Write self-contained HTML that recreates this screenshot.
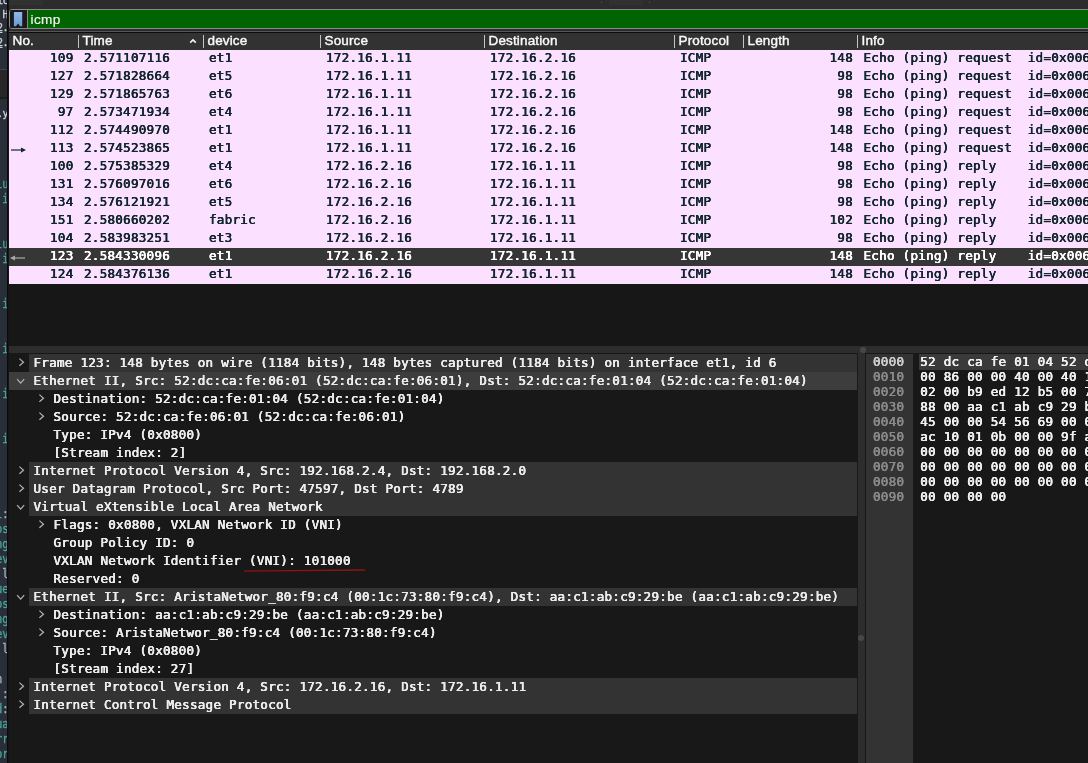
<!DOCTYPE html><html><head><meta charset="utf-8"><title>Wireshark</title><style>
*{margin:0;padding:0;box-sizing:border-box}
html,body{width:1088px;height:763px;overflow:hidden;background:#171717}
body{position:relative;font-family:"Liberation Sans",sans-serif;}
.abs{position:absolute}
.mono{font-family:"DejaVu Sans Mono","Liberation Mono",monospace;font-size:12.6px;letter-spacing:0.24px;white-space:pre;-webkit-text-stroke:0.15px;text-shadow:0.22px 0 0 currentColor,-0.22px 0 0 currentColor;will-change:transform}
#strip{will-change:transform;left:0;top:0;width:8px;height:763px;background:#292f38;overflow:hidden}
#strip span{position:absolute;right:0px;letter-spacing:-0.5px;-webkit-text-stroke:0.3px;font-family:"DejaVu Sans Mono","Liberation Mono",monospace;font-size:10px;line-height:14px;height:14px;white-space:pre}#strip b{font-weight:normal}
#strip .blk{position:absolute;left:0;top:69px;width:8px;height:30px;background:#272727;border-top:1px solid #454545;border-bottom:2px solid #1c1c1c}
#edge{left:7px;top:0;width:2px;height:763px;background:linear-gradient(to right,#0b0b0c 0,#0b0b0c 1px,#161416 1px,#161416 2px)}
#toolbar{left:9px;top:0;width:1079px;height:31px;background:#2c2c2c}
#tline{z-index:5;left:9px;top:31px;width:1079px;height:2px;background:#0c0c0c;border-top:1px solid #555}
#filter{will-change:transform;left:9px;top:9px;width:1090px;height:20px;border:1px solid #8a8a8a;border-radius:3px;background:#1b1b1b;overflow:hidden}#filter .gr{position:absolute;left:18px;top:0;width:1080px;height:18px;background:#006400}
#filter .bm{position:absolute;left:0;top:0;width:18px;height:18px;background:#1b1b1b;border-right:1px solid #8a8a8a;padding-left:1px}#filter .bm svg{display:block}
#filter .txt{position:absolute;left:20.6px;top:1px;height:18px;line-height:18px;font-size:13.6px;letter-spacing:0.3px;color:#f4f4f4;-webkit-text-stroke:0.2px}
#header{will-change:transform;-webkit-text-stroke:0.4px;letter-spacing:0.15px;left:9px;top:32px;border-top:0;width:1079px;height:18px;background:#323232;color:#fafafa;font-size:13.5px;line-height:18px}
#header span{position:absolute;top:0;white-space:pre}
#header i{position:absolute;top:3px;width:1px;height:13px;background:#c4c4c4}
#plist{left:9px;top:50px;width:1079px;height:234px;background:#fce0ff}
.row{position:absolute;left:0;width:1079px;height:18px;line-height:18px;color:#12272e}
.row.sel{background:#363636;color:#fff}
.row span{position:absolute;top:-1px;-webkit-text-stroke:0.2px;text-shadow:0.2px 0 0 currentColor,-0.2px 0 0 currentColor}
.row .r{text-align:right}
#pbelow{left:9px;top:284px;width:1079px;height:62px;background:#171717}
#hsplit{left:9px;top:346px;width:1079px;height:7px;background:#2d2d2d}
#tree{left:9px;top:354px;width:848px;height:409px;background:#181818;overflow:hidden}
.trow{position:absolute;left:0;width:848px;height:18px;line-height:18px;color:#ececec}
.trow .bg{position:absolute;top:0;height:18px;right:0;background:#333}
.trow .t{position:absolute;top:0}
.trow svg{position:absolute;top:0}
#vsplit{left:857px;top:353px;width:9px;height:410px;background:#2d2d2d;border-left:1px solid #191919;border-right:1px solid #191919}
#hex{left:866px;top:354px;width:222px;height:409px;background:#181818;overflow:hidden}
#hex .off{position:absolute;left:0;top:0;width:47px;height:409px;background:#333}
.hrow{position:absolute;left:0;height:15px;line-height:15px;width:400px}
.hrow .o{position:absolute;left:7px;top:0;color:#8a8a8a}
  .hrow .b{position:absolute;left:53.3px;top:0;color:#f0f0f0;padding-left:1px}
.hrow.hl .o{color:#cdcdcd}
.hrow.hl .b{background:#3a3a3a;height:16px}
.dot{width:6px;height:6px;border-radius:3px;background:#484848}
</style></head><body>
<div id="strip" class="abs"><div class="blk"></div>
<span style="top:-6.5px;color:#cfd3d9">ic</span>
<span style="top:7.5px;color:#cfd3d9"> H</span>
<span style="top:21.0px;color:#cfd3d9"><u>2</u>.</span>
<span style="top:35.5px;color:#cfd3d9"><u>2</u>.</span>
<span style="top:106.5px;color:#cfd3d9">.y</span>
<span style="font-size:12px;line-height:15px;right:-0.6px;letter-spacing:0;transform:scaleX(0.87);transform-origin:right center;top:177.0px;color:#4ba59e">lu</span>
<span style="font-size:12px;line-height:15px;right:-0.6px;letter-spacing:0;transform:scaleX(0.87);transform-origin:right center;top:192.0px;color:#4ba59e">'i</span>
<span style="font-size:12px;line-height:15px;right:-0.6px;letter-spacing:0;transform:scaleX(0.87);transform-origin:right center;top:237.0px;color:#4ba59e">lu</span>
<span style="font-size:12px;line-height:15px;right:-0.6px;letter-spacing:0;transform:scaleX(0.87);transform-origin:right center;top:252.0px;color:#4ba59e">'i</span>
<span style="font-size:12px;line-height:15px;right:-0.6px;letter-spacing:0;transform:scaleX(0.87);transform-origin:right center;top:297.0px;color:#4ba59e">'i</span>
<span style="font-size:12px;line-height:15px;right:-0.6px;letter-spacing:0;transform:scaleX(0.87);transform-origin:right center;top:342.0px;color:#4ba59e">'i</span>
<span style="font-size:12px;line-height:15px;right:-0.6px;letter-spacing:0;transform:scaleX(0.87);transform-origin:right center;top:387.0px;color:#4ba59e">'i</span>
<span style="font-size:12px;line-height:15px;right:-0.6px;letter-spacing:0;transform:scaleX(0.87);transform-origin:right center;top:432.0px;color:#4ba59e">'i</span>
<span style="font-size:12px;line-height:15px;right:-0.6px;letter-spacing:0;transform:scaleX(0.87);transform-origin:right center;top:507.0px;color:#4ba59e"><b style="color:#4ba59e">l</b><b style="color:#aab2bb">:</b></span>
<span style="font-size:12px;line-height:15px;right:-0.6px;letter-spacing:0;transform:scaleX(0.87);transform-origin:right center;top:522.0px;color:#4ba59e">os</span>
<span style="font-size:12px;line-height:15px;right:-0.6px;letter-spacing:0;transform:scaleX(0.87);transform-origin:right center;top:537.0px;color:#4ba59e">ng</span>
<span style="font-size:12px;line-height:15px;right:-0.6px;letter-spacing:0;transform:scaleX(0.87);transform-origin:right center;top:552.0px;color:#4ba59e">ev</span>
<span style="font-size:12px;line-height:15px;right:-0.6px;letter-spacing:0;transform:scaleX(0.87);transform-origin:right center;top:567.0px;color:#aab2bb"> l</span>
<span style="font-size:12px;line-height:15px;right:-0.6px;letter-spacing:0;transform:scaleX(0.87);transform-origin:right center;top:582.0px;color:#4ba59e">ue</span>
<span style="font-size:12px;line-height:15px;right:-0.6px;letter-spacing:0;transform:scaleX(0.87);transform-origin:right center;top:597.0px;color:#4ba59e">os</span>
<span style="font-size:12px;line-height:15px;right:-0.6px;letter-spacing:0;transform:scaleX(0.87);transform-origin:right center;top:612.0px;color:#4ba59e">ng</span>
<span style="font-size:12px;line-height:15px;right:-0.6px;letter-spacing:0;transform:scaleX(0.87);transform-origin:right center;top:627.0px;color:#4ba59e">ev</span>
<span style="font-size:12px;line-height:15px;right:-0.6px;letter-spacing:0;transform:scaleX(0.87);transform-origin:right center;top:642.0px;color:#aab2bb"> l</span>
<span style="font-size:12px;line-height:15px;right:-0.6px;letter-spacing:0;transform:scaleX(0.87);transform-origin:right center;top:672.0px;color:#aab2bb">n </span>
<span style="font-size:12px;line-height:15px;right:-0.6px;letter-spacing:0;transform:scaleX(0.87);transform-origin:right center;top:687.0px;color:#aab2bb">::</span>
<span style="font-size:12px;line-height:15px;right:-0.6px;letter-spacing:0;transform:scaleX(0.87);transform-origin:right center;top:702.0px;color:#4ba59e"><b style="color:#4ba59e">d</b><b style="color:#aab2bb">:</b></span>
<span style="font-size:12px;line-height:15px;right:-0.6px;letter-spacing:0;transform:scaleX(0.87);transform-origin:right center;top:717.0px;color:#4ba59e">ua</span>
<span style="font-size:12px;line-height:15px;right:-0.6px;letter-spacing:0;transform:scaleX(0.87);transform-origin:right center;top:732.0px;color:#4ba59e">rr</span>
<span style="font-size:12px;line-height:15px;right:-0.6px;letter-spacing:0;transform:scaleX(0.87);transform-origin:right center;top:747.0px;color:#4ba59e">or</span>
</div><div id="edge" class="abs"></div>
<div id="toolbar" class="abs"><div class="abs" style="left:0;top:0;width:34px;height:5px;background:#313131"></div><div class="abs" style="left:600px;top:0;width:34px;height:5px;background:#313131"></div><div class="abs" style="left:592px;top:2px;width:1px;height:1px;background:#5a5a5a"></div><div class="abs" style="left:640px;top:2px;width:1px;height:1px;background:#5a5a5a"></div></div><div id="tline" class="abs"></div>
<div id="filter" class="abs"><div class="gr"></div><div class="bm"><svg width="16" height="18" viewBox="0 0 16 18"><defs><linearGradient id="bmg" x1="0" y1="0" x2="0" y2="1"><stop offset="0" stop-color="#8fb9ea"/><stop offset="1" stop-color="#6b9bd3"/></linearGradient></defs><path d="M2.9 1.9H11.2V16.2H9.1L7.05 13.6L4.9 16.2H2.9z" fill="url(#bmg)"/></svg></div><div class="txt">icmp</div></div>
<div id="header" class="abs">
<span style="left:3.5px">No.</span>
<i style="left:69px"></i>
<span style="left:73.5px">Time</span>
<i style="left:194px"></i>
<span style="left:198.5px">device</span>
<i style="left:311px"></i>
<span style="left:315.5px">Source</span>
<i style="left:475px"></i>
<span style="left:479.5px">Destination</span>
<i style="left:665px"></i>
<span style="left:669.5px">Protocol</span>
<i style="left:734px"></i>
<span style="left:738.5px">Length</span>
<i style="left:848px"></i>
<span style="left:852.5px">Info</span>
<svg class="abs" style="left:180.2px;top:6px" width="8" height="6" viewBox="0 0 8 6"><path d="M1.2 4.6L4 1.9L6.8 4.6" fill="none" stroke="#f4f4f4" stroke-width="1.6"/></svg>
</div>
<div id="plist" class="abs mono">
<div class="row" style="top:0px"><span class="r" style="left:0;width:64.5px">109</span><span style="left:75px">2.571107116</span><span style="left:200px">et1</span><span style="left:317px">172.16.1.11</span><span style="left:481px">172.16.2.16</span><span style="left:671px">ICMP</span><span class="r" style="left:780px;width:64px">148</span><span style="left:854.5px">Echo (ping) request  id=0x006a, seq=1/256, ttl=64</span></div>
<div class="row" style="top:18px"><span class="r" style="left:0;width:64.5px">127</span><span style="left:75px">2.571828664</span><span style="left:200px">et5</span><span style="left:317px">172.16.1.11</span><span style="left:481px">172.16.2.16</span><span style="left:671px">ICMP</span><span class="r" style="left:780px;width:64px">98</span><span style="left:854.5px">Echo (ping) request  id=0x006a, seq=1/256, ttl=64</span></div>
<div class="row" style="top:36px"><span class="r" style="left:0;width:64.5px">129</span><span style="left:75px">2.571865763</span><span style="left:200px">et6</span><span style="left:317px">172.16.1.11</span><span style="left:481px">172.16.2.16</span><span style="left:671px">ICMP</span><span class="r" style="left:780px;width:64px">98</span><span style="left:854.5px">Echo (ping) request  id=0x006a, seq=1/256, ttl=64</span></div>
<div class="row" style="top:54px"><span class="r" style="left:0;width:64.5px">97</span><span style="left:75px">2.573471934</span><span style="left:200px">et4</span><span style="left:317px">172.16.1.11</span><span style="left:481px">172.16.2.16</span><span style="left:671px">ICMP</span><span class="r" style="left:780px;width:64px">98</span><span style="left:854.5px">Echo (ping) request  id=0x006a, seq=1/256, ttl=64</span></div>
<div class="row" style="top:72px"><span class="r" style="left:0;width:64.5px">112</span><span style="left:75px">2.574490970</span><span style="left:200px">et1</span><span style="left:317px">172.16.1.11</span><span style="left:481px">172.16.2.16</span><span style="left:671px">ICMP</span><span class="r" style="left:780px;width:64px">148</span><span style="left:854.5px">Echo (ping) request  id=0x006a, seq=1/256, ttl=64</span></div>
<div class="row" style="top:90px"><svg class="abs" style="left:1px;top:4.9px" width="20" height="10" viewBox="0 0 20 10"><path d="M1 5H12" stroke="#12272e" stroke-width="1.2"/><path d="M11 2.5L16 5L11 7.5z" fill="#12272e"/></svg><span class="r" style="left:0;width:64.5px">113</span><span style="left:75px">2.574523865</span><span style="left:200px">et1</span><span style="left:317px">172.16.1.11</span><span style="left:481px">172.16.2.16</span><span style="left:671px">ICMP</span><span class="r" style="left:780px;width:64px">148</span><span style="left:854.5px">Echo (ping) request  id=0x006a, seq=1/256, ttl=64</span></div>
<div class="row" style="top:108px"><span class="r" style="left:0;width:64.5px">100</span><span style="left:75px">2.575385329</span><span style="left:200px">et4</span><span style="left:317px">172.16.2.16</span><span style="left:481px">172.16.1.11</span><span style="left:671px">ICMP</span><span class="r" style="left:780px;width:64px">98</span><span style="left:854.5px">Echo (ping) reply    id=0x006a, seq=1/256, ttl=64</span></div>
<div class="row" style="top:126px"><span class="r" style="left:0;width:64.5px">131</span><span style="left:75px">2.576097016</span><span style="left:200px">et6</span><span style="left:317px">172.16.2.16</span><span style="left:481px">172.16.1.11</span><span style="left:671px">ICMP</span><span class="r" style="left:780px;width:64px">98</span><span style="left:854.5px">Echo (ping) reply    id=0x006a, seq=1/256, ttl=64</span></div>
<div class="row" style="top:144px"><span class="r" style="left:0;width:64.5px">134</span><span style="left:75px">2.576121921</span><span style="left:200px">et5</span><span style="left:317px">172.16.2.16</span><span style="left:481px">172.16.1.11</span><span style="left:671px">ICMP</span><span class="r" style="left:780px;width:64px">98</span><span style="left:854.5px">Echo (ping) reply    id=0x006a, seq=1/256, ttl=64</span></div>
<div class="row" style="top:162px"><span class="r" style="left:0;width:64.5px">151</span><span style="left:75px">2.580660202</span><span style="left:200px">fabric</span><span style="left:317px">172.16.2.16</span><span style="left:481px">172.16.1.11</span><span style="left:671px">ICMP</span><span class="r" style="left:780px;width:64px">102</span><span style="left:854.5px">Echo (ping) reply    id=0x006a, seq=1/256, ttl=64</span></div>
<div class="row" style="top:180px"><span class="r" style="left:0;width:64.5px">104</span><span style="left:75px">2.583983251</span><span style="left:200px">et3</span><span style="left:317px">172.16.2.16</span><span style="left:481px">172.16.1.11</span><span style="left:671px">ICMP</span><span class="r" style="left:780px;width:64px">98</span><span style="left:854.5px">Echo (ping) reply    id=0x006a, seq=1/256, ttl=64</span></div>
<div class="row sel" style="top:198px"><svg class="abs" style="left:1px;top:4.9px" width="20" height="10" viewBox="0 0 20 10"><path d="M4 5H15" stroke="#a8a8a8" stroke-width="1.2"/><path d="M5 2.4L0 5L5 7.6z" fill="#a8a8a8"/></svg><span class="r" style="left:0;width:64.5px">123</span><span style="left:75px">2.584330096</span><span style="left:200px">et1</span><span style="left:317px">172.16.2.16</span><span style="left:481px">172.16.1.11</span><span style="left:671px">ICMP</span><span class="r" style="left:780px;width:64px">148</span><span style="left:854.5px">Echo (ping) reply    id=0x006a, seq=1/256, ttl=64</span></div>
<div class="row" style="top:216px"><span class="r" style="left:0;width:64.5px">124</span><span style="left:75px">2.584376136</span><span style="left:200px">et1</span><span style="left:317px">172.16.2.16</span><span style="left:481px">172.16.1.11</span><span style="left:671px">ICMP</span><span class="r" style="left:780px;width:64px">148</span><span style="left:854.5px">Echo (ping) reply    id=0x006a, seq=1/256, ttl=64</span></div>
</div>
<div id="pbelow" class="abs"></div><div id="hsplit" class="abs"></div>
<div id="tree" class="abs mono">
<div class="trow" style="top:0px"><div class="bg" style="left:20px"></div><svg style="left:8px" width="12" height="18" viewBox="0 0 12 18"><path d="M2.4 4.6L6.5 8.2L2.4 11.8" fill="none" stroke="#b4b4b4" stroke-width="1.2"/></svg><span class="t" style="left:24.5px">Frame 123: 148 bytes on wire (1184 bits), 148 bytes captured (1184 bits) on interface et1, id 6</span></div>
<div class="trow" style="top:18px"><div class="bg" style="left:0;background:#3d3d3d"></div><svg style="left:6px" width="14" height="18" viewBox="0 0 14 18"><path d="M2.1 7.2L5.65 11.1L9.2 7.2" fill="none" stroke="#b4b4b4" stroke-width="1.2"/></svg><span class="t" style="left:24.5px">Ethernet II, Src: 52:dc:ca:fe:06:01 (52:dc:ca:fe:06:01), Dst: 52:dc:ca:fe:01:04 (52:dc:ca:fe:01:04)</span></div>
<div class="trow" style="top:36px"><svg style="left:28px" width="12" height="18" viewBox="0 0 12 18"><path d="M2.4 4.6L6.5 8.2L2.4 11.8" fill="none" stroke="#b4b4b4" stroke-width="1.2"/></svg><span class="t" style="left:44.5px">Destination: 52:dc:ca:fe:01:04 (52:dc:ca:fe:01:04)</span></div>
<div class="trow" style="top:54px"><svg style="left:28px" width="12" height="18" viewBox="0 0 12 18"><path d="M2.4 4.6L6.5 8.2L2.4 11.8" fill="none" stroke="#b4b4b4" stroke-width="1.2"/></svg><span class="t" style="left:44.5px">Source: 52:dc:ca:fe:06:01 (52:dc:ca:fe:06:01)</span></div>
<div class="trow" style="top:72px"><span class="t" style="left:44.5px">Type: IPv4 (0x0800)</span></div>
<div class="trow" style="top:90px"><span class="t" style="left:44.5px">[Stream index: 2]</span></div>
<div class="trow" style="top:108px"><div class="bg" style="left:20px"></div><svg style="left:8px" width="12" height="18" viewBox="0 0 12 18"><path d="M2.4 4.6L6.5 8.2L2.4 11.8" fill="none" stroke="#b4b4b4" stroke-width="1.2"/></svg><span class="t" style="left:24.5px">Internet Protocol Version 4, Src: 192.168.2.4, Dst: 192.168.2.0</span></div>
<div class="trow" style="top:126px"><div class="bg" style="left:20px"></div><svg style="left:8px" width="12" height="18" viewBox="0 0 12 18"><path d="M2.4 4.6L6.5 8.2L2.4 11.8" fill="none" stroke="#b4b4b4" stroke-width="1.2"/></svg><span class="t" style="left:24.5px">User Datagram Protocol, Src Port: 47597, Dst Port: 4789</span></div>
<div class="trow" style="top:144px"><div class="bg" style="left:20px"></div><svg style="left:6px" width="14" height="18" viewBox="0 0 14 18"><path d="M2.1 7.2L5.65 11.1L9.2 7.2" fill="none" stroke="#b4b4b4" stroke-width="1.2"/></svg><span class="t" style="left:24.5px">Virtual eXtensible Local Area Network</span></div>
<div class="trow" style="top:162px"><svg style="left:28px" width="12" height="18" viewBox="0 0 12 18"><path d="M2.4 4.6L6.5 8.2L2.4 11.8" fill="none" stroke="#b4b4b4" stroke-width="1.2"/></svg><span class="t" style="left:44.5px">Flags: 0x0800, VXLAN Network ID (VNI)</span></div>
<div class="trow" style="top:180px"><span class="t" style="left:44.5px">Group Policy ID: 0</span></div>
<div class="trow" style="top:198px"><span class="t" style="left:44.5px">VXLAN Network Identifier (VNI): 101000</span><svg style="left:234px;top:14px" width="124" height="8" viewBox="0 0 124 8"><path d="M1.4 5.1L121.6 4" stroke="#8e1313" stroke-width="1.3" stroke-linecap="round" fill="none"/></svg></div>
<div class="trow" style="top:216px"><span class="t" style="left:44.5px">Reserved: 0</span></div>
<div class="trow" style="top:234px"><div class="bg" style="left:20px"></div><svg style="left:6px" width="14" height="18" viewBox="0 0 14 18"><path d="M2.1 7.2L5.65 11.1L9.2 7.2" fill="none" stroke="#b4b4b4" stroke-width="1.2"/></svg><span class="t" style="left:24.5px">Ethernet II, Src: AristaNetwor_80:f9:c4 (00:1c:73:80:f9:c4), Dst: aa:c1:ab:c9:29:be (aa:c1:ab:c9:29:be)</span></div>
<div class="trow" style="top:252px"><svg style="left:28px" width="12" height="18" viewBox="0 0 12 18"><path d="M2.4 4.6L6.5 8.2L2.4 11.8" fill="none" stroke="#b4b4b4" stroke-width="1.2"/></svg><span class="t" style="left:44.5px">Destination: aa:c1:ab:c9:29:be (aa:c1:ab:c9:29:be)</span></div>
<div class="trow" style="top:270px"><svg style="left:28px" width="12" height="18" viewBox="0 0 12 18"><path d="M2.4 4.6L6.5 8.2L2.4 11.8" fill="none" stroke="#b4b4b4" stroke-width="1.2"/></svg><span class="t" style="left:44.5px">Source: AristaNetwor_80:f9:c4 (00:1c:73:80:f9:c4)</span></div>
<div class="trow" style="top:288px"><span class="t" style="left:44.5px">Type: IPv4 (0x0800)</span></div>
<div class="trow" style="top:306px"><span class="t" style="left:44.5px">[Stream index: 27]</span></div>
<div class="trow" style="top:324px"><div class="bg" style="left:20px"></div><svg style="left:8px" width="12" height="18" viewBox="0 0 12 18"><path d="M2.4 4.6L6.5 8.2L2.4 11.8" fill="none" stroke="#b4b4b4" stroke-width="1.2"/></svg><span class="t" style="left:24.5px">Internet Protocol Version 4, Src: 172.16.2.16, Dst: 172.16.1.11</span></div>
<div class="trow" style="top:342px"><div class="bg" style="left:20px"></div><svg style="left:8px" width="12" height="18" viewBox="0 0 12 18"><path d="M2.4 4.6L6.5 8.2L2.4 11.8" fill="none" stroke="#b4b4b4" stroke-width="1.2"/></svg><span class="t" style="left:24.5px">Internet Control Message Protocol</span></div>
</div>
<div id="vsplit" class="abs"></div>
<div class="abs dot" style="left:860px;top:347px"></div>
<div class="abs dot" style="left:858px;top:635px;width:6px;height:6px;background:#484848"></div>
<div id="hex" class="abs mono"><div class="off"></div>
<div class="hrow hl" style="top:0px"><span class="o">0000</span><span class="b">52 dc ca fe 01 04 52 dc ca fe 06 01 08 00 45 00</span></div>
<div class="hrow" style="top:15px"><span class="o">0010</span><span class="b">00 86 00 00 40 00 40 11 b5 14 c0 a8 02 04 c0 a8</span></div>
<div class="hrow" style="top:30px"><span class="o">0020</span><span class="b">02 00 b9 ed 12 b5 00 72 00 00 08 00 00 00 01 8a</span></div>
<div class="hrow" style="top:45px"><span class="o">0030</span><span class="b">88 00 aa c1 ab c9 29 be 00 1c 73 80 f9 c4 08 00</span></div>
<div class="hrow" style="top:60px"><span class="o">0040</span><span class="b">45 00 00 54 56 69 00 00 3f 01 c9 f5 ac 10 02 10</span></div>
<div class="hrow" style="top:75px"><span class="o">0050</span><span class="b">ac 10 01 0b 00 00 9f a6 00 6a 00 01 5c 0f 8d 65</span></div>
<div class="hrow" style="top:90px"><span class="o">0060</span><span class="b">00 00 00 00 00 00 00 00 00 00 00 00 00 00 00 00</span></div>
<div class="hrow" style="top:105px"><span class="o">0070</span><span class="b">00 00 00 00 00 00 00 00 00 00 00 00 00 00 00 00</span></div>
<div class="hrow" style="top:120px"><span class="o">0080</span><span class="b">00 00 00 00 00 00 00 00 00 00 00 00 00 00 00 00</span></div>
<div class="hrow" style="top:135px"><span class="o">0090</span><span class="b">00 00 00 00</span></div>
</div>
</body></html>
